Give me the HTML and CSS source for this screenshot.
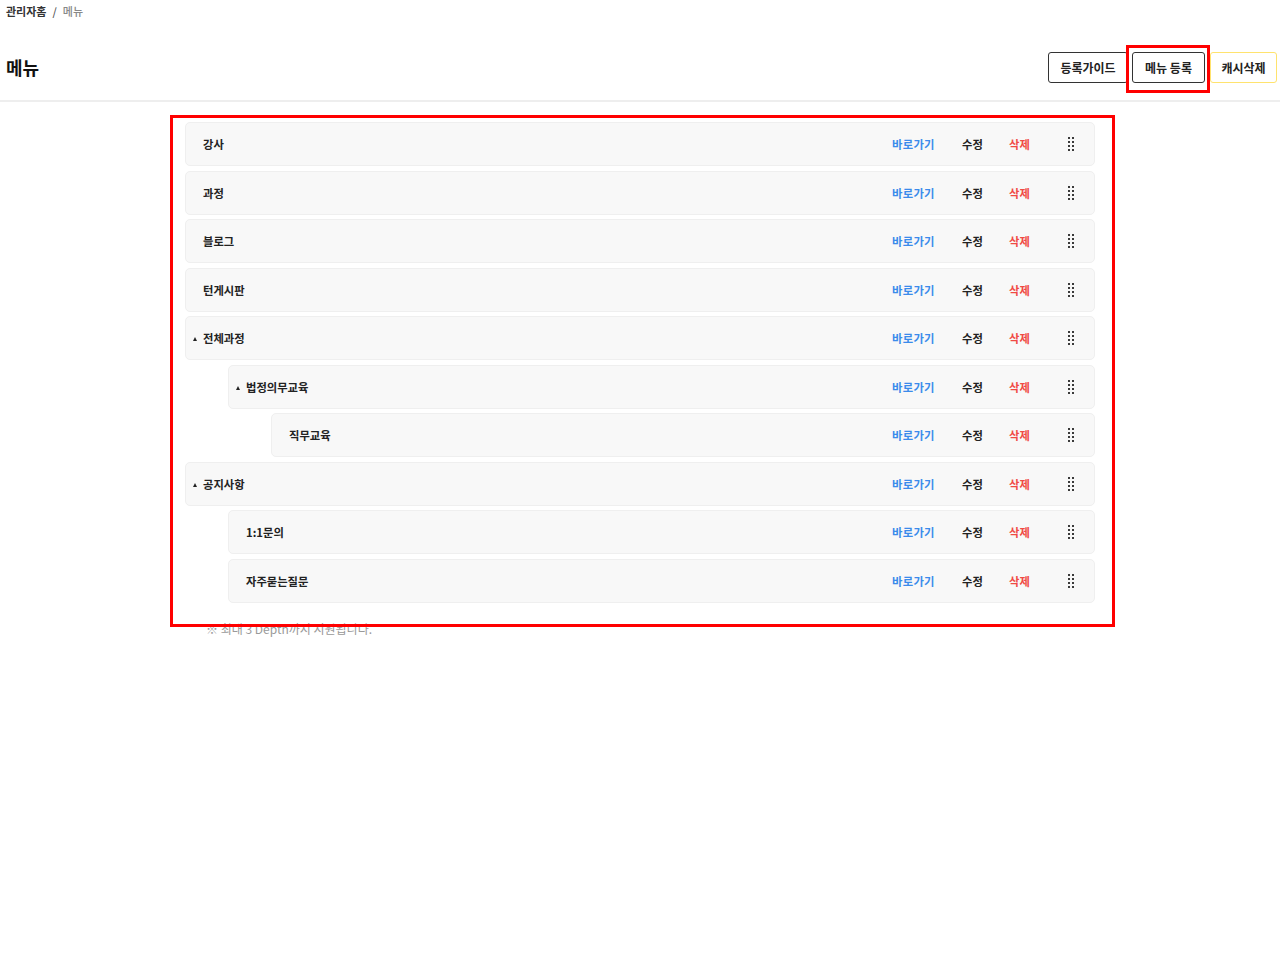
FILE: index.html
```html
<!doctype html>
<html>
<head>
<meta charset="utf-8"/>
<title>메뉴</title>
<link rel="stylesheet" href="styles.css">
</head>
<body>

<div class="header">
	<div class="crumb"><span class="crumb-home">관리자홈</span><span class="crumb-sep">/</span><span class="crumb-cur">메뉴</span></div>
	<div class="title-row">
		<h1 class="title">메뉴</h1>
		<div class="btns">
			<span class="btn btn-guide">등록가이드</span>
			<span class="btn btn-add mark">메뉴 등록</span>
			<span class="btn btn-cache">캐시삭제</span>
		</div>
	</div>
</div>

<div class="menu-box">
	<ul class="menu-list">
		<li class="row"><span class="name">강사</span><span class="go">바로가기</span><span class="edit">수정</span><span class="del">삭제</span><span class="handle"><svg width="6" height="14" viewBox="0 0 6 14"><g fill="#3a3a3a"><rect x="0" y="0" width="2" height="2"/><rect x="4" y="0" width="2" height="2"/><rect x="0" y="4" width="2" height="2"/><rect x="4" y="4" width="2" height="2"/><rect x="0" y="8" width="2" height="2"/><rect x="4" y="8" width="2" height="2"/><rect x="0" y="12" width="2" height="2"/><rect x="4" y="12" width="2" height="2"/></g></svg></span></li>
		<li class="row"><span class="name">과정</span><span class="go">바로가기</span><span class="edit">수정</span><span class="del">삭제</span><span class="handle"><svg width="6" height="14" viewBox="0 0 6 14"><g fill="#3a3a3a"><rect x="0" y="0" width="2" height="2"/><rect x="4" y="0" width="2" height="2"/><rect x="0" y="4" width="2" height="2"/><rect x="4" y="4" width="2" height="2"/><rect x="0" y="8" width="2" height="2"/><rect x="4" y="8" width="2" height="2"/><rect x="0" y="12" width="2" height="2"/><rect x="4" y="12" width="2" height="2"/></g></svg></span></li>
		<li class="row"><span class="name">블로그</span><span class="go">바로가기</span><span class="edit">수정</span><span class="del">삭제</span><span class="handle"><svg width="6" height="14" viewBox="0 0 6 14"><g fill="#3a3a3a"><rect x="0" y="0" width="2" height="2"/><rect x="4" y="0" width="2" height="2"/><rect x="0" y="4" width="2" height="2"/><rect x="4" y="4" width="2" height="2"/><rect x="0" y="8" width="2" height="2"/><rect x="4" y="8" width="2" height="2"/><rect x="0" y="12" width="2" height="2"/><rect x="4" y="12" width="2" height="2"/></g></svg></span></li>
		<li class="row"><span class="name">턴게시판</span><span class="go">바로가기</span><span class="edit">수정</span><span class="del">삭제</span><span class="handle"><svg width="6" height="14" viewBox="0 0 6 14"><g fill="#3a3a3a"><rect x="0" y="0" width="2" height="2"/><rect x="4" y="0" width="2" height="2"/><rect x="0" y="4" width="2" height="2"/><rect x="4" y="4" width="2" height="2"/><rect x="0" y="8" width="2" height="2"/><rect x="4" y="8" width="2" height="2"/><rect x="0" y="12" width="2" height="2"/><rect x="4" y="12" width="2" height="2"/></g></svg></span></li>
		<li class="row"><span class="name"><i class="tri"></i>전체과정</span><span class="go">바로가기</span><span class="edit">수정</span><span class="del">삭제</span><span class="handle"><svg width="6" height="14" viewBox="0 0 6 14"><g fill="#3a3a3a"><rect x="0" y="0" width="2" height="2"/><rect x="4" y="0" width="2" height="2"/><rect x="0" y="4" width="2" height="2"/><rect x="4" y="4" width="2" height="2"/><rect x="0" y="8" width="2" height="2"/><rect x="4" y="8" width="2" height="2"/><rect x="0" y="12" width="2" height="2"/><rect x="4" y="12" width="2" height="2"/></g></svg></span></li>
		<li class="row depth2"><span class="name"><i class="tri"></i>법정의무교육</span><span class="go">바로가기</span><span class="edit">수정</span><span class="del">삭제</span><span class="handle"><svg width="6" height="14" viewBox="0 0 6 14"><g fill="#3a3a3a"><rect x="0" y="0" width="2" height="2"/><rect x="4" y="0" width="2" height="2"/><rect x="0" y="4" width="2" height="2"/><rect x="4" y="4" width="2" height="2"/><rect x="0" y="8" width="2" height="2"/><rect x="4" y="8" width="2" height="2"/><rect x="0" y="12" width="2" height="2"/><rect x="4" y="12" width="2" height="2"/></g></svg></span></li>
		<li class="row depth3"><span class="name">직무교육</span><span class="go">바로가기</span><span class="edit">수정</span><span class="del">삭제</span><span class="handle"><svg width="6" height="14" viewBox="0 0 6 14"><g fill="#3a3a3a"><rect x="0" y="0" width="2" height="2"/><rect x="4" y="0" width="2" height="2"/><rect x="0" y="4" width="2" height="2"/><rect x="4" y="4" width="2" height="2"/><rect x="0" y="8" width="2" height="2"/><rect x="4" y="8" width="2" height="2"/><rect x="0" y="12" width="2" height="2"/><rect x="4" y="12" width="2" height="2"/></g></svg></span></li>
		<li class="row"><span class="name"><i class="tri"></i>공지사항</span><span class="go">바로가기</span><span class="edit">수정</span><span class="del">삭제</span><span class="handle"><svg width="6" height="14" viewBox="0 0 6 14"><g fill="#3a3a3a"><rect x="0" y="0" width="2" height="2"/><rect x="4" y="0" width="2" height="2"/><rect x="0" y="4" width="2" height="2"/><rect x="4" y="4" width="2" height="2"/><rect x="0" y="8" width="2" height="2"/><rect x="4" y="8" width="2" height="2"/><rect x="0" y="12" width="2" height="2"/><rect x="4" y="12" width="2" height="2"/></g></svg></span></li>
		<li class="row depth2"><span class="name">1:1문의</span><span class="go">바로가기</span><span class="edit">수정</span><span class="del">삭제</span><span class="handle"><svg width="6" height="14" viewBox="0 0 6 14"><g fill="#3a3a3a"><rect x="0" y="0" width="2" height="2"/><rect x="4" y="0" width="2" height="2"/><rect x="0" y="4" width="2" height="2"/><rect x="4" y="4" width="2" height="2"/><rect x="0" y="8" width="2" height="2"/><rect x="4" y="8" width="2" height="2"/><rect x="0" y="12" width="2" height="2"/><rect x="4" y="12" width="2" height="2"/></g></svg></span></li>
		<li class="row depth2"><span class="name">자주묻는질문</span><span class="go">바로가기</span><span class="edit">수정</span><span class="del">삭제</span><span class="handle"><svg width="6" height="14" viewBox="0 0 6 14"><g fill="#3a3a3a"><rect x="0" y="0" width="2" height="2"/><rect x="4" y="0" width="2" height="2"/><rect x="0" y="4" width="2" height="2"/><rect x="4" y="4" width="2" height="2"/><rect x="0" y="8" width="2" height="2"/><rect x="4" y="8" width="2" height="2"/><rect x="0" y="12" width="2" height="2"/><rect x="4" y="12" width="2" height="2"/></g></svg></span></li>
	</ul>
</div>
<p class="note">※ 최대 3 Depth까지 지원됩니다.</p>

</body>
</html>
```
FILE: styles.css
```css
*{ margin:0; padding:0; list-style:none; box-sizing:border-box;}
body{ background:#fff; color:#222; font-family:"Noto Sans CJK KR","Noto Sans",sans-serif;}

.header{ height:102px; padding:3px 3px 0 6px; border-bottom:2px solid #eee;}
.crumb{ font-size:11px; line-height:16px; color:#333; font-weight:500;}
.crumb-home{ font-weight:bold;}
.crumb-sep{ margin:0 6px; color:#555;}
.crumb-cur{ color:#888;}
.title-row{ display:flex; justify-content:space-between; align-items:center; height:34px; margin-top:31px;}
.title{ font-size:18px; font-weight:bold; color:#111;}
.btns{ display:flex; gap:4px;}
.btn{ display:flex; align-items:center; justify-content:center; height:31px; border:1px solid #333; border-radius:3px; font-size:12px; font-weight:bold; color:#222; background:#fff;}
.btn-guide{ width:80px;}
.btn-add{ width:73px;}
.btn-cache{ width:67px; border-color:#ffe36e; margin-left:1px;}
.mark{ position:relative;}
.mark:after{ content:""; position:absolute; left:-7px; right:-6px; top:-8px; bottom:-11px; border:3px solid #f00;}

.menu-box{ position:relative; z-index:1; width:945px; margin:13px 0 0 170px; padding:4px 17px 21px 12px; border:3px solid #f00;}
.row{ display:flex; align-items:center; height:44px; margin-bottom:4.5px; padding:0 20px 0 17px; background:#f8f8f8; border:1px solid #efefef; border-radius:5px; font-size:11.3px; font-weight:bold;}
.row:last-child{ margin-bottom:0;}
.depth2{ margin-left:43px;}
.depth3{ margin-left:86px;}
.name{ flex:1; position:relative; color:#222;}
.tri{ position:absolute; left:-10px; top:7px; width:0; height:0; border-left:2.5px solid transparent; border-right:2.5px solid transparent; border-bottom:4px solid #222;}
.go{ width:70px; color:#3b8beb; letter-spacing:0.3px;}
.edit{ width:47px; color:#222;}
.del{ width:59px; color:#f04a44;}
.handle{ display:flex; width:6px;}

.note{ margin:-6px 0 0 206px; font-size:12px; line-height:16px; color:#999;}
```
